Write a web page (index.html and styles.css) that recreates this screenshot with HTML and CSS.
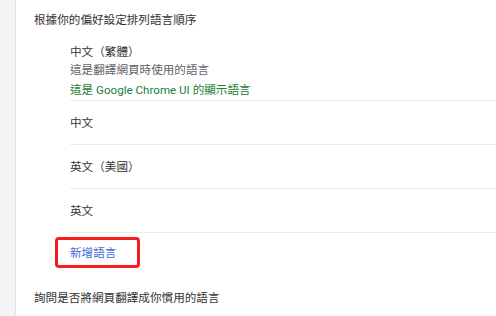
FILE: index.html
```html
<!DOCTYPE html>
<html lang="zh-Hant">
<head>
<meta charset="utf-8">
<link rel="stylesheet" href="styles.css">
</head>
<body>
<div class="page">
  <div class="rail"></div>
  <div class="card">
    <div class="title">根據你的偏好設定排列語言順序</div>
    <div class="list">
      <div class="item first">
        <div class="name">中文（繁體）</div>
        <div class="sub">這是翻譯網頁時使用的語言</div>
        <div class="ui">這是 Google Chrome UI 的顯示語言</div>
      </div>
      <div class="item row"><div class="name">中文</div></div>
      <div class="item row"><div class="name">英文（美國）</div></div>
      <div class="item row"><div class="name">英文</div></div>
    </div>
    <div class="add-wrap"><span class="add">新增語言</span></div>
    <div class="title bottom">詢問是否將網頁翻譯成你慣用的語言</div>
  </div>
</div>
</body>
</html>
```

FILE: styles.css
```css
html, body {
  margin: 0;
  padding: 0;
  background: #ffffff;
}
body {
  font-family: Roboto, "Noto Sans CJK TC", "Noto Sans", sans-serif;
  font-size: 11.6px;
  line-height: 16px;
  color: #333333;
  text-spacing-trim: space-all;
}
.page {
  display: flex;
  width: 496px;
  height: 316px;
  overflow: hidden;
}
.rail {
  width: 15px;
  flex: none;
  background: #f3f4f5;
  border-right: 1px solid #e3e4e6;
}
.card {
  flex: 1;
  background: #ffffff;
  padding-left: 18px;
}
.title {
  margin-top: 12px;
  color: #333333;
}
.title.bottom {
  margin-top: 22px;
}
.list {
  margin-left: 36px;
  margin-top: 16px;
}
.item {
  border-bottom: 1px solid #ebebeb;
}
.item.first {
  padding-bottom: 2px;
}
.sub {
  margin-top: 2px;
  color: #5f6368;
}
.ui {
  margin-top: 4px;
  color: #188038;
}
.row {
  height: 43px;
  display: flex;
  align-items: center;
}
.add-wrap {
  margin-top: 4px;
  margin-left: 21px;
}
.add {
  display: inline-block;
  border: 3px solid #f41c1c;
  border-radius: 4px;
  padding: 5px 21px 4px 12px;
  color: #3f68d9;
}
```
